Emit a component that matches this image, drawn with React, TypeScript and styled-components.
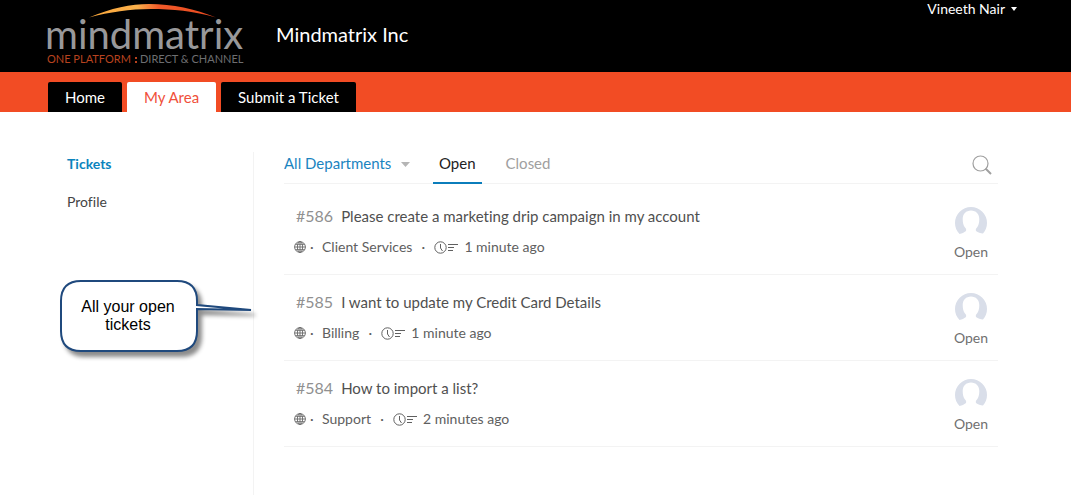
import React from "react";
import styled, { createGlobalStyle } from "styled-components";

const GlobalStyle = createGlobalStyle`
  * { box-sizing: border-box; }
  html, body, #root { height: 100%; }
  body {
    margin: 0;
    background: #fff;
    color: #444;
    font-family: Lato, "Open Sans", sans-serif;
    font-variant-ligatures: none;
    font-size: 15px;
    line-height: 20px;
  }
  button, select { font: inherit; }
  a { color: inherit; text-decoration: none; }
`;

const Page = styled.div`
  min-height: 100%;
  display: flex;
  flex-direction: column;
`;

const Header = styled.header`
  height: 72px;
  padding: 0 54px 0 46px;
  display: flex;
  align-items: flex-start;
  background: #000;
  color: #fff;
`;

const LogoLink = styled.a`
  display: block;
  height: 72px;
`;

const Company = styled.h1`
  margin: 22px 0 0 28px;
  flex: 1;
  font-size: 20px;
  line-height: 24px;
  font-weight: 400;
`;

const UserMenu = styled.button`
  display: flex;
  align-items: center;
  gap: 6px;
  padding: 0;
  border: 0;
  background: none;
  color: #fff;
  font-size: 14px;
  line-height: 18px;
  cursor: pointer;
`;

const Nav = styled.nav`
  display: flex;
  gap: 5px;
  padding: 10px 48px 0;
  background: #f24c24;
`;

const NavTab = styled.a<{ $active?: boolean }>`
  padding: 5px 17px;
  border-radius: 2px 2px 0 0;
  background: ${(p) => (p.$active ? "#fff" : "#000")};
  color: ${(p) => (p.$active ? "#f0503a" : "#fff")};
`;

const Main = styled.div`
  flex: 1;
  display: flex;
  padding: 40px 73px 0 48px;
`;

const Sidebar = styled.aside`
  position: relative;
  flex: 0 0 206px;
  padding: 2px 19px;
  border-right: 1px solid #f3f3f3;
`;

const SideLink = styled.a<{ $active?: boolean }>`
  display: block;
  margin-bottom: 18px;
  font-size: 14px;
  font-weight: ${(p) => (p.$active ? 700 : 400)};
  color: ${(p) => (p.$active ? "#0b83bd" : "#444")};
`;

const Callout = styled.div`
  position: absolute;
  top: 126px;
  left: 11px;
  width: 200px;
  height: 84px;
`;

const CalloutShape = styled.svg`
  position: absolute;
  inset: 0;
  overflow: visible;
`;

const CalloutText = styled.p`
  position: relative;
  width: 138px;
  margin: 0;
  padding: 20px 20px 0;
  text-align: center;
  font-family: "Liberation Sans", Arial, sans-serif;
  font-size: 16px;
  line-height: 18px;
  color: #000;
`;

const Content = styled.main`
  flex: 1;
  min-width: 0;
  padding-left: 30px;
`;

const Toolbar = styled.div`
  display: flex;
  height: 32px;
  border-bottom: 1px solid #f3f3f3;
`;

const Department = styled.label`
  display: flex;
  align-items: center;
  height: 24px;
  width: 126px;
`;

const DepartmentSelect = styled.select`
  flex: 1;
  min-width: 0;
  padding: 0 0 2px;
  border: 0;
  appearance: none;
  background: none;
  color: #1b84bf;
  cursor: pointer;
`;

const Filter = styled.button<{ $active?: boolean }>`
  height: 32px;
  margin-left: ${(p) => (p.$active ? 23 : 18)}px;
  padding: 0 6px 8px;
  border: 0;
  border-bottom: ${(p) => (p.$active ? "2px solid #0b7dbb" : "2px solid transparent")};
  background: none;
  color: ${(p) => (p.$active ? "#222" : "#a0a0a0")};
  cursor: pointer;
`;

const SearchButton = styled.button`
  height: 24px;
  margin-left: auto;
  padding: 3px 6px 0;
  border: 0;
  background: none;
  cursor: pointer;
`;

const TicketList = styled.ul`
  margin: 0;
  padding: 5px 0 0;
  list-style: none;
`;

const Ticket = styled.li`
  display: flex;
  justify-content: space-between;
  height: 86px;
  padding: 17px 10px 0 10px;
  border-bottom: 1px solid #f3f3f3;
`;

const Title = styled.a`
  display: flex;
  align-items: baseline;
  gap: 8px;
  padding-left: 2px;
  color: #505050;
`;

const TicketId = styled.span`
  font-size: 16px;
  color: #909090;
`;

const Meta = styled.div`
  display: flex;
  align-items: center;
  margin-top: 11px;
  font-size: 14px;
  color: #606060;
`;

const Dot = styled.span`
  width: 16px;
  text-align: left;
  padding-left: 4px;
`;

const MidDot = styled.span`
  width: 22px;
  text-align: center;
`;

const Time = styled.time`
  padding-left: 6px;
`;

const Status = styled.div`
  display: flex;
  flex-direction: column;
  align-items: center;
  gap: 7px;
  padding-top: 1px;
  font-size: 14px;
  color: #707070;
`;

const Logo = () => (
  <svg width="202" height="72" viewBox="0 0 202 72" role="img" aria-label="mindmatrix">
    <defs>
      <linearGradient id="arc" x1="0" x2="1">
        <stop offset="0" stopColor="#f9a63a" />
        <stop offset="0.38" stopColor="#fbb04b" />
        <stop offset="0.55" stopColor="#f15a29" />
        <stop offset="1" stopColor="#e8481f" />
      </linearGradient>
    </defs>
    <path d="M43 17.500C65 8 85 4 103 4c24 0 46 5 67 13.500C148 11 126 9 105 9 84 9 64 12 43 17.500Z" fill="url(#arc)" />
    <text x="-1" y="49" fontSize="40" fill="#98989a">mindmatrix</text>
    <text x="1" y="63" fontSize="11" fill="#b8431f">ONE PLATFORM</text>
    <path d="M89 57h2v2h-2zM89 61h2v2h-2z" fill="#b8431f" />
    <text x="94" y="63" fontSize="11" fill="#6d6e70">DIRECT &amp; CHANNEL</text>
  </svg>
);

const Caret = ({ color, width, height }: { color: string; width: number; height: number }) => (
  <svg width={width} height={height} viewBox="0 0 10 5" preserveAspectRatio="none" aria-hidden="true">
    <path d="M0 0h10L5 5z" fill={color} />
  </svg>
);

const SearchIcon = () => (
  <svg width="20" height="20" viewBox="0 0 20 20" fill="none" stroke="#a0a0a0" aria-hidden="true">
    <circle cx="8.5" cy="8.5" r="7.500" strokeWidth="1.2" />
    <path d="M13.500 13.500l5.500 5.500" strokeWidth="2" />
  </svg>
);

const GlobeIcon = () => (
  <svg width="12" height="12" viewBox="0 0 12 12" fill="none" stroke="#666" strokeWidth="0.9" aria-hidden="true">
    <circle cx="6" cy="6" r="5.400" />
    <ellipse cx="6" cy="6" rx="2.6" ry="5.400" />
    <path d="M6 .5v11M.5 6h11M1.400 3.300h9.200M1.400 8.700h9.200" />
  </svg>
);

const ClockIcon = () => (
  <svg width="24" height="13" viewBox="0 0 24 13" fill="none" stroke="#606060" aria-hidden="true">
    <circle cx="6.5" cy="6.5" r="5.700" />
    <path d="M6.500 3v4l2 3" />
    <path d="M14 3.500h10M14 6.500h6M14 9.500h5" />
  </svg>
);

const Avatar = () => (
  <svg width="32" height="28" viewBox="0 0 32 28" role="img" aria-label="Unassigned">
    <path
      d="M4.500 27C1.500 24 0 20 0 16a16 16 0 0 1 32 0c0 4-1.500 8-4 10.500-2.500 0-5-1-7-2.500-.5-1.500 0-2.500 1-3.500 1.500-2 2.300-4.500 2.300-8.500 0-5-3.300-8.500-8.300-8.500S7.700 7 7.700 12c0 4 .8 6.500 2.300 8.500 1 1 1.500 2 1 3.500-2 1.500-4 2.700-6.500 3z"
      fill="#d9dee9"
    />
  </svg>
);

const tickets = [
  { id: 586, title: "Please create a marketing drip campaign in my account", department: "Client Services", time: "1 minute ago" },
  { id: 585, title: "I want to update my Credit Card Details", department: "Billing", time: "1 minute ago" },
  { id: 584, title: "How to import a list?", department: "Support", time: "2 minutes ago" },
];

export default function App() {
  return (
    <Page>
      <GlobalStyle />
      <Header>
        <LogoLink href="#home"><Logo /></LogoLink>
        <Company>Mindmatrix Inc</Company>
        <UserMenu type="button">
          Vineeth Nair <Caret color="#fff" width={6} height={4} />
        </UserMenu>
      </Header>
      <Nav>
        <NavTab href="#home">Home</NavTab>
        <NavTab href="#area" $active>My Area</NavTab>
        <NavTab href="#submit">Submit a Ticket</NavTab>
      </Nav>
      <Main>
        <Sidebar>
          <SideLink href="#tickets" $active>Tickets</SideLink>
          <SideLink href="#profile">Profile</SideLink>
          <Callout>
            <CalloutShape width="200" height="84" viewBox="0 0 200 84" aria-hidden="true">
              <path
                d="M22 3H118Q138 3 138 23V27L192 32L138 31V53Q138 73 118 73H22Q2 73 2 53V23Q2 3 22 3Z"
                fill="#fff"
                stroke="#1f497d"
                strokeWidth="2"
                style={{ filter: "drop-shadow(4px 5px 2px rgba(0,0,0,.45))" }}
              />
            </CalloutShape>
            <CalloutText>All your open tickets</CalloutText>
          </Callout>
        </Sidebar>
        <Content>
          <Toolbar>
            <Department>
              <DepartmentSelect aria-label="Department">
                <option>All Departments</option>
              </DepartmentSelect>
              <Caret color="#b5b5b5" width={9} height={5} />
            </Department>
            <Filter type="button" $active>Open</Filter>
            <Filter type="button">Closed</Filter>
            <SearchButton type="button" aria-label="Search"><SearchIcon /></SearchButton>
          </Toolbar>
          <TicketList>
            {tickets.map((t) => (
              <Ticket key={t.id}>
                <div>
                  <Title href={`#${t.id}`}>
                    <TicketId>#{t.id}</TicketId>
                    {t.title}
                  </Title>
                  <Meta>
                    <GlobeIcon />
                    <Dot>·</Dot>
                    <span>{t.department}</span>
                    <MidDot>·</MidDot>
                    <ClockIcon />
                    <Time>{t.time}</Time>
                  </Meta>
                </div>
                <Status>
                  <Avatar />
                  Open
                </Status>
              </Ticket>
            ))}
          </TicketList>
        </Content>
      </Main>
    </Page>
  );
}
